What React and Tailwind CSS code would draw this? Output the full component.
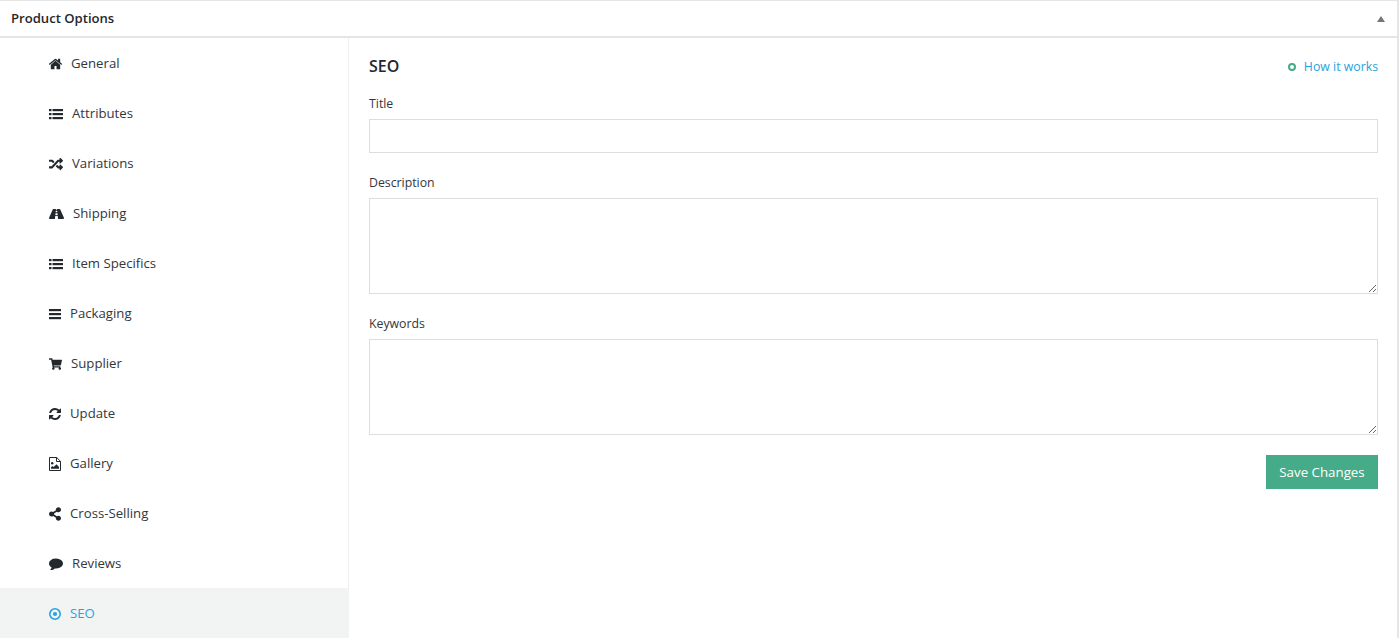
import { FaRandom, FaRoad, FaShoppingCart, FaShareAlt } from "react-icons/fa"

const HomeIcon = ({ className }) => (
    <svg viewBox="97 200 1600 1400" className={className} fill="currentColor">
        <path d="M1472 992v480q0 26-19 45t-45 19h-384v-384h-256v384h-384q-26 0-45-19t-19-45v-480q0-1 .5-3t.5-3l575-474 575 474q1 2 1 6zm223-69l-62 74q-8 9-21 11h-3q-13 0-21-7l-692-577-692 577q-12 8-24 7-13-2-21-11l-62-74q-8-10-7-23.5t11-22.5l719-599q32-26 76-26t76 26l244 204v-195q0-14 9-23t23-9h192q14 0 23 9t9 23v408l219 182q10 8 11 22t-7 24z" />
    </svg>
)

const ListIcon = ({ className }) => (
    <svg viewBox="0 0 14 14" className={className} fill="currentColor">
        <rect x="0" y="2" width="2.5" height="2.2" />
        <rect x="0" y="6" width="2.5" height="2.2" />
        <rect x="0" y="10" width="2.5" height="2.2" />
        <rect x="3.5" y="2" width="10.5" height="2.2" />
        <rect x="3.5" y="6" width="10.5" height="2.2" />
        <rect x="3.5" y="10" width="10.5" height="2.2" />
    </svg>
)

const BarsIcon = ({ className }) => (
    <svg viewBox="0 0 12 14" className={className} fill="currentColor">
        <rect x="0" y="2" width="12" height="2.2" />
        <rect x="0" y="6" width="12" height="2.2" />
        <rect x="0" y="10" width="12" height="2.2" />
    </svg>
)

const RefreshIcon = ({ className }) => (
    <svg viewBox="128 128 1536 1536" className={className} fill="currentColor">
        <path d="M1639 1056q0 5-1 7-64 268-268 434.5t-478 166.5q-146 0-282.5-55t-243.5-157l-129 129q-19 19-45 19t-45-19-19-45v-448q0-26 19-45t45-19h448q26 0 45 19t19 45-19 45l-137 137q71 66 161 102t187 36q134 0 250-65t186-179q11-17 53-117 8-23 30-23h192q13 0 22.5 9.5t9.5 22.5zm25-800v448q0 26-19 45t-45 19h-448q-26 0-45-19t-19-45 19-45l138-138q-148-137-349-137-134 0-250 65t-186 179q-11 17-53 117-8 23-30 23h-199q-13 0-22.5-9.5t-9.5-22.5v-7q65-268 270-434.5t480-166.5q146 0 284 55.5t245 156.5l130-129q19-19 45-19t45 19 19 45z" />
    </svg>
)

const GalleryIcon = ({ className }) => (
    <svg viewBox="0 0 12 14" className={className}>
        <path d="M.5 .5h7.2l3.8 3.8v9.2h-11z" fill="none" stroke="currentColor" />
        <path d="M7.5 .5v4h4" fill="none" stroke="currentColor" />
        <circle cx="3.2" cy="6.2" r="1.2" fill="currentColor" />
        <path d="M2 11.8v-1.5l1.5-1.2 1.2 1 2.8-2.8 2.5 2.6v1.9z" fill="currentColor" />
    </svg>
)

const CommentIcon = ({ className }) => (
    <svg viewBox="0 0 1792 1600" className={className} fill="currentColor">
        <path d="M1792 700q0 174-120 321.5t-326 233-450 85.5q-70 0-145-8-198 175-460 242-49 14-114 22-17 2-30.5-9t-17.5-29v-1q-3-4-.5-12t2-10 4.5-9.5l6-9 7-8.5 8-9q7-8 31-34.5t34.5-38 31-39.5 32.5-51 27-59 26-76q-157-89-247.5-220t-90.5-281q0-130 71-248.5t191-204.5 286-136.5 348-50.5q244 0 450 85.5t326 233 120 321.5z" />
    </svg>
)

const DotCircleIcon = ({ className }) => (
    <svg viewBox="0 0 12 12" className={className}>
        <circle cx="6" cy="6" r="5.2" fill="none" stroke="currentColor" strokeWidth="1.6" />
        <circle cx="6" cy="6" r="2.1" fill="currentColor" />
    </svg>
)

const menu = [
    { label: "General", icon: HomeIcon, size: "w-[13px] h-[12px]" },
    { label: "Attributes", icon: ListIcon, size: "w-[14px] h-[14px]" },
    { label: "Variations", icon: FaRandom, size: "w-[14px] h-[14px]" },
    { label: "Shipping", icon: FaRoad, size: "w-[15px] h-[14px]" },
    { label: "Item Specifics", icon: ListIcon, size: "w-[14px] h-[14px]" },
    { label: "Packaging", icon: BarsIcon, size: "w-[12px] h-[14px]" },
    { label: "Supplier", icon: FaShoppingCart, size: "w-[13px] h-[12px]" },
    { label: "Update", icon: RefreshIcon, size: "w-[12px] h-[12px]" },
    { label: "Gallery", icon: GalleryIcon, size: "w-[12px] h-[14px]" },
    { label: "Cross-Selling", icon: FaShareAlt, size: "w-[12px] h-[14px]" },
    { label: "Reviews", icon: CommentIcon, size: "w-[14px] h-[12.5px]" },
    { label: "SEO", icon: DotCircleIcon, size: "w-[12px] h-[12px]", active: true },
]

const App = () => {
    return (
        <div className="h-[640px] bg-white font-['Open_Sans',sans-serif] text-[12.3px] text-[#32373c] overflow-hidden">
            <div className="mr-[1px] border-t border-r-2 border-[#e5e5e5]">
                <div className="flex h-[37px] items-center justify-between border-b-2 border-[#e5e5e5] pl-[11px] pr-[12px]">
                    <h2 className="text-[13.1px] font-semibold text-[#23282d]">Product Options</h2>
                    <svg viewBox="0 0 8 6" className="h-[6px] w-[8px] text-[#72777c]" fill="currentColor">
                        <path d="M4 0l4 6h-8z" />
                    </svg>
                </div>
                <div className="flex">
                    <ul className="w-[349px] shrink-0 border-r border-[#eeeeee]">
                        {menu.map(item => {
                            const Icon = item.icon
                            return (
                                <li
                                    key={item.label}
                                    className={`flex h-[50px] items-center gap-[9px] pl-[49px] pt-[2px] text-[13.2px] ${item.active ? "w-[349px] bg-[#f2f4f4] text-[#27a3dd]" : "text-[#32373c]"}`}
                                >
                                    <Icon className={`${item.size} shrink-0 ${item.active ? "text-[#27a3dd]" : "text-[#23282d]"}`} />
                                    <span>{item.label}</span>
                                </li>
                            )
                        })}
                    </ul>
                    <div className="flex-1 pl-[20px] pr-[19px]">
                        <div className="flex items-center justify-between pt-[17px]">
                            <h3 className="text-[16px] font-semibold leading-[22px] text-[#23282d]">SEO</h3>
                            <a className="flex items-center gap-[8px] pt-[2px] text-[#27a3dd]">
                                <span className="h-[8px] w-[8px] rounded-full border-2 border-[#46ab89]"></span>
                                How it works
                            </a>
                        </div>
                        <label className="mt-[18px] block leading-[18px]">Title</label>
                        <input className="mt-[6px] block h-[34px] w-full border border-[#dddddd] outline-none" />
                        <label className="mt-[21px] block leading-[18px]">Description</label>
                        <textarea className="mt-[6px] block h-[96px] w-full border border-[#dddddd] outline-none"></textarea>
                        <label className="mt-[21px] block leading-[18px]">Keywords</label>
                        <textarea className="mt-[6px] block h-[96px] w-full border border-[#dddddd] outline-none"></textarea>
                        <div className="mt-[20px] flex justify-end">
                            <button className="h-[34px] w-[112px] bg-[#46ab89] pt-[1px] text-[13.3px] text-white">Save Changes</button>
                        </div>
                    </div>
                </div>
            </div>
        </div>
    )
}

export default App
